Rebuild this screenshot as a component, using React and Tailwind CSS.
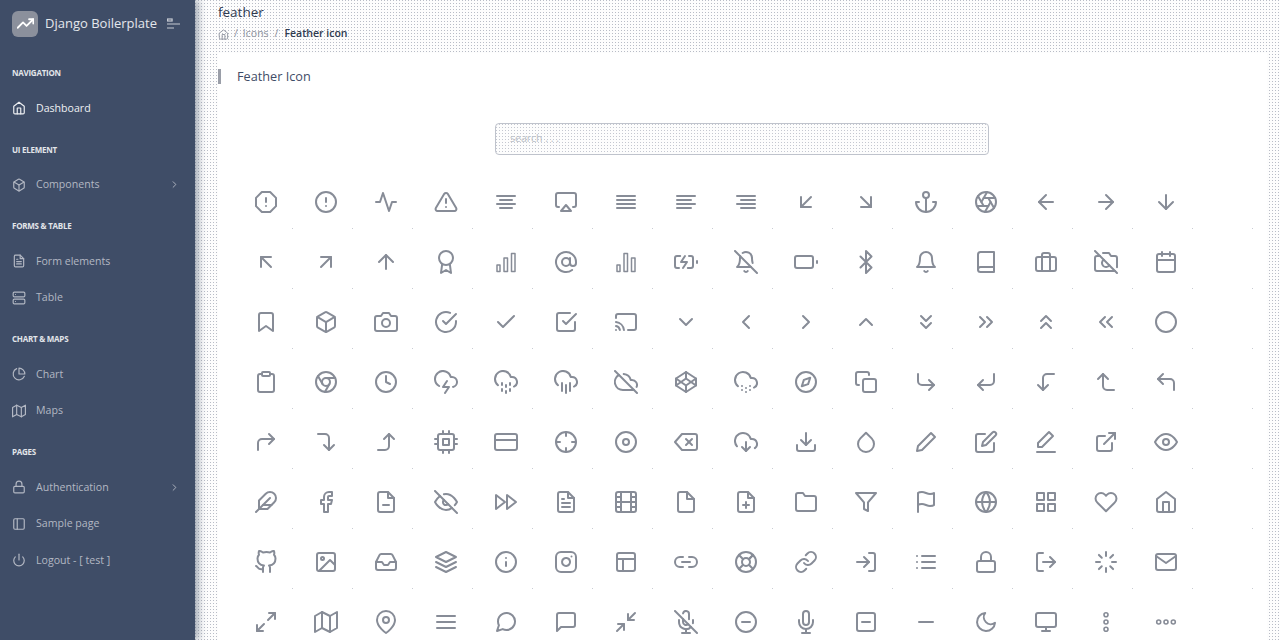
import React from 'react';
import {
  FiActivity, FiAirplay, FiAlertCircle, FiAlertOctagon, FiAlertTriangle, FiAlignCenter, FiAlignJustify, FiAlignLeft,
  FiAlignRight, FiAnchor, FiAperture, FiArrowDown, FiArrowDownLeft, FiArrowDownRight, FiArrowLeft, FiArrowRight,
  FiArrowUp, FiArrowUpLeft, FiArrowUpRight, FiAtSign, FiAward, FiBattery, FiBatteryCharging,
  FiBell, FiBellOff, FiBluetooth, FiBook, FiBookmark, FiBox, FiBriefcase, FiCalendar, FiCamera, FiCameraOff, FiCast,
  FiCheck, FiCheckCircle, FiCheckSquare, FiChevronDown, FiChevronLeft, FiChevronRight, FiChevronUp, FiChevronsDown,
  FiChevronsLeft, FiChevronsRight, FiChevronsUp, FiChrome, FiCircle, FiClipboard, FiClock, FiCloudDrizzle,
  FiCloudLightning, FiCloudOff, FiCloudRain, FiCloudSnow, FiCodepen, FiCompass, FiCopy, FiCornerDownLeft,
  FiCornerDownRight, FiCornerLeftDown, FiCornerLeftUp, FiCornerRightDown, FiCornerRightUp, FiCornerUpLeft,
  FiCornerUpRight, FiCpu, FiCreditCard, FiCrosshair, FiDelete, FiDisc, FiDownload, FiDownloadCloud, FiDroplet, FiEdit,
  FiExternalLink, FiEye, FiEyeOff, FiFacebook, FiFastForward, FiFeather, FiFile, FiFileMinus,
  FiFilePlus, FiFileText, FiFilm, FiFilter, FiFlag, FiFolder, FiGithub, FiGlobe, FiGrid, FiHeart, FiHome, FiImage,
  FiInbox, FiInfo, FiInstagram, FiLayers, FiLayout, FiLifeBuoy, FiLink, FiLink2, FiList, FiLoader, FiLock, FiLogIn,
  FiLogOut, FiMail, FiMap, FiMapPin, FiMaximize2, FiMenu, FiMessageCircle, FiMessageSquare, FiMic, FiMicOff,
  FiMinimize2, FiMinus, FiMinusCircle, FiMinusSquare, FiMonitor, FiMoon, FiPieChart,
  FiPower, FiServer, FiSidebar, FiTrendingUp,
} from 'react-icons/fi';

const Glyph = ({ size = 24, strokeWidth = 2, children }) => (
  <svg
    width={size}
    height={size}
    viewBox="0 0 24 24"
    fill="none"
    stroke="currentColor"
    strokeWidth={strokeWidth}
    strokeLinecap="round"
    strokeLinejoin="round"
  >
    {children}
  </svg>
);

const BarsRising = (props) => (
  <Glyph {...props} strokeWidth={1.5}>
    <rect x="3" y="15" width="3" height="6.5" />
    <rect x="10" y="8" width="3.5" height="13.5" />
    <rect x="17.5" y="3.5" width="3.5" height="18" />
  </Glyph>
);

const BarsMixed = (props) => (
  <Glyph {...props} strokeWidth={1.5}>
    <rect x="3" y="15" width="3" height="6.5" />
    <rect x="10" y="3.5" width="3.5" height="18" />
    <rect x="17.5" y="8" width="3.5" height="13.5" />
  </Glyph>
);

const Pencil = (props) => (
  <Glyph {...props}>
    <polygon points="17 3 21 7 8 20 3 21 4 16 17 3" />
  </Glyph>
);

const PencilLine = (props) => (
  <Glyph {...props}>
    <polygon points="15 2 19 6 8 17 4 17 4 13 15 2" />
    <line x1="3" y1="22" x2="21" y2="22" />
  </Glyph>
);

const DotsVertical = (props) => (
  <Glyph {...props} strokeWidth={1.6}>
    <circle cx="12" cy="4.7" r="2" />
    <circle cx="12" cy="12" r="2" />
    <circle cx="12" cy="19.3" r="2" />
  </Glyph>
);

const DotsHorizontal = (props) => (
  <Glyph {...props} strokeWidth={1.6}>
    <circle cx="4.7" cy="12" r="2" />
    <circle cx="12" cy="12" r="2" />
    <circle cx="19.3" cy="12" r="2" />
  </Glyph>
);

const icons = [
  FiAlertOctagon, FiAlertCircle, FiActivity, FiAlertTriangle, FiAlignCenter, FiAirplay, FiAlignJustify, FiAlignLeft,
  FiAlignRight, FiArrowDownLeft, FiArrowDownRight, FiAnchor, FiAperture, FiArrowLeft, FiArrowRight, FiArrowDown,
  FiArrowUpLeft, FiArrowUpRight, FiArrowUp, FiAward, BarsRising, FiAtSign, BarsMixed, FiBatteryCharging,
  FiBellOff, FiBattery, FiBluetooth, FiBell, FiBook, FiBriefcase, FiCameraOff, FiCalendar,
  FiBookmark, FiBox, FiCamera, FiCheckCircle, FiCheck, FiCheckSquare, FiCast, FiChevronDown,
  FiChevronLeft, FiChevronRight, FiChevronUp, FiChevronsDown, FiChevronsRight, FiChevronsUp, FiChevronsLeft, FiCircle,
  FiClipboard, FiChrome, FiClock, FiCloudLightning, FiCloudDrizzle, FiCloudRain, FiCloudOff, FiCodepen,
  FiCloudSnow, FiCompass, FiCopy, FiCornerDownRight, FiCornerDownLeft, FiCornerLeftDown, FiCornerLeftUp, FiCornerUpLeft,
  FiCornerUpRight, FiCornerRightDown, FiCornerRightUp, FiCpu, FiCreditCard, FiCrosshair, FiDisc, FiDelete,
  FiDownloadCloud, FiDownload, FiDroplet, Pencil, FiEdit, PencilLine, FiExternalLink, FiEye,
  FiFeather, FiFacebook, FiFileMinus, FiEyeOff, FiFastForward, FiFileText, FiFilm, FiFile,
  FiFilePlus, FiFolder, FiFilter, FiFlag, FiGlobe, FiGrid, FiHeart, FiHome,
  FiGithub, FiImage, FiInbox, FiLayers, FiInfo, FiInstagram, FiLayout, FiLink2,
  FiLifeBuoy, FiLink, FiLogIn, FiList, FiLock, FiLogOut, FiLoader, FiMail,
  FiMaximize2, FiMap, FiMapPin, FiMenu, FiMessageCircle, FiMessageSquare, FiMinimize2, FiMicOff,
  FiMinusCircle, FiMic, FiMinusSquare, FiMinus, FiMoon, FiMonitor, DotsVertical, DotsHorizontal,
];

const nav = [
  { caption: 'Navigation', items: [{ label: 'Dashboard', icon: FiHome, active: true }] },
  { caption: 'UI Element', items: [{ label: 'Components', icon: FiBox, more: true }] },
  { caption: 'Forms & Table', items: [{ label: 'Form elements', icon: FiFileText }, { label: 'Table', icon: FiServer }] },
  { caption: 'Chart & Maps', items: [{ label: 'Chart', icon: FiPieChart }, { label: 'Maps', icon: FiMap }] },
  {
    caption: 'Pages',
    items: [
      { label: 'Authentication', icon: FiLock, more: true },
      { label: 'Sample page', icon: FiSidebar },
      { label: 'Logout - [ test ]', icon: FiPower },
    ],
  },
];

const Sidebar = () => (
  <aside className="relative z-10 w-[195px] shrink-0 bg-[#3f4d67] shadow-[4px_0_7px_rgba(63,77,103,0.45)]">
    <div className="flex h-[50px] items-center pl-3 pb-[3px]">
      <div className="flex h-[26px] w-[26px] items-center justify-center rounded-[6px] bg-[#8b909c]">
        <FiTrendingUp className="text-white" size={17} strokeWidth={2.5} />
      </div>
      <span className="ml-[7px] text-[13px] text-[#e4e7ec]">Django Boilerplate</span>
      <svg className="ml-[10px]" width="14" height="12" viewBox="0 0 14 12" fill="none" stroke="#c6cad2" strokeWidth="1.2">
        <rect x="0.6" y="1" width="4.5" height="2" />
        <path d="M0 6h13M0 10h7" />
      </svg>
    </div>
    <nav>
      {nav.map((group) => (
        <div key={group.caption}>
          <div className="h-10 pt-[17px] pl-3 text-[8px] leading-3 font-bold tracking-[-0.25px] text-[#e2e5ea] uppercase">
            {group.caption}
          </div>
          {group.items.map((item) => (
            <a
              key={item.label}
              className={`flex h-[36.5px] items-center pl-3 text-[10.6px] ${item.active ? 'text-[#eef0f3]' : 'text-[#b3b8c3]'}`}
            >
              <item.icon size={14} className="shrink-0" />
              <span className="ml-[10px] flex-1 pt-[1px]">{item.label}</span>
              {item.more && <FiChevronRight size={11} className="mr-[15px]" />}
            </a>
          ))}
        </div>
      ))}
    </nav>
  </aside>
);

const Main = () => (
  <main className="flex-1 overflow-hidden bg-[#fdfdfd] bg-[radial-gradient(circle_at_0.5px_0.5px,#b8bcc6_0.6px,transparent_0.6px)] bg-[length:3px_3px] pl-[23px] pr-[13px]">
    <h5 className="h-[24px] text-[13.5px] leading-6 text-[#2f3a50]">feather</h5>
    <div className="flex h-[29px] items-center pb-[9px] text-[10.5px] text-[#8f94a0]">
      <FiHome size={11} />
      <span className="mx-[5px]">/</span>
      <span>Icons</span>
      <span className="mx-[6px]">/</span>
      <span className="font-semibold text-[#2f3a50]">Feather icon</span>
    </div>
    <section className="h-[640px] bg-white">
      <div className="h-[70px] pt-4">
        <h5 className="flex h-[15px] items-center border-l-[3px] border-[#9a9ea8] pl-4 text-[12.7px] text-[#3f4d67]">
          Feather Icon
        </h5>
      </div>
      <div className="flex justify-center pr-[1px]">
        <input
          type="text"
          placeholder="search . . ."
          className="h-8 w-[494px] rounded-[4px] border border-[#bfc3cc] bg-[#fdfdfd] bg-[radial-gradient(circle_at_0.5px_0.5px,#c4c7d0_0.6px,transparent_0.6px)] bg-[length:3px_3px] px-[14px] pb-[2px] text-[10.5px] placeholder:text-[#b9bdc6]"
        />
      </div>
      <div className="mt-[17px] ml-[18px] grid grid-cols-[repeat(16,60px)] bg-[radial-gradient(circle_at_56.5px_56.5px,#c9ccd3_0.7px,transparent_0.7px)] bg-[length:60px_60px]">
        {icons.map((Icon, i) => (
          <div key={i} className="flex h-[60px] items-center justify-center text-[#878c97]">
            <Icon size={24} strokeWidth={2} />
          </div>
        ))}
      </div>
    </section>
  </main>
);

export default function App() {
  return (
    <div className="flex h-[640px] overflow-hidden font-['Open_Sans',sans-serif]">
      <Sidebar />
      <Main />
    </div>
  );
}
